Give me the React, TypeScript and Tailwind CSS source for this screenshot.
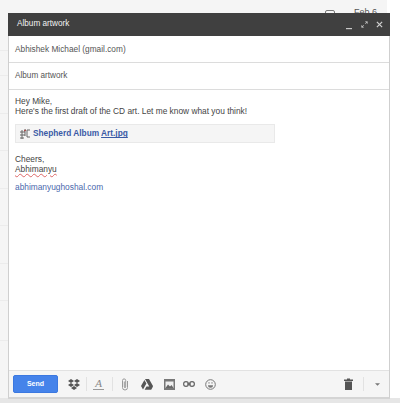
import React from 'react'

function Divider() {
  return <div className="w-px h-[14px] bg-[#e2e2e2]" />
}

export default function App() {
  return (
    <div className="relative w-[400px] h-[403px] overflow-hidden bg-[#f5f5f5] font-['Liberation_Sans',Arial,sans-serif] text-[#444]">
      {/* page behind the compose window */}
      <div className="absolute top-0 right-0 w-[13px] h-full bg-white" />
      <div className="absolute bottom-0 left-0 w-full h-[5px] bg-[#e6e6e6]" />
      <span className="absolute left-[354px] top-[7px] text-[9px] leading-[10px] text-[#555]">Feb 6</span>
      <div className="absolute left-[325px] top-[10px] w-[10px] h-[6px] rounded-[2px] border border-[#777]" />
      {[50, 75, 113, 150, 188, 225, 263, 300, 340].map((y) => (
        <div key={y} className="absolute left-0 w-[8px] h-px bg-[#ececec]" style={{ top: y }} />
      ))}

      <div className="relative ml-[8px] mt-[13px] w-[382px] h-[386px] flex flex-col bg-white border-x border-[#cfcfcf] border-b-2 border-b-[#d4d4d4]">
        <div className="h-[23px] -mx-px shrink-0 bg-[#404040] flex items-center pl-[9px] pr-[7px]">
          <span className="text-[8.2px] text-[#f2f2f2]">Album artwork</span>
          <div className="ml-auto flex items-center gap-[8px]">
            <svg width="6" height="8" viewBox="0 0 6 8" className="mt-[2px] mr-[1px]">
              <rect x="0" y="6" width="6" height="1.2" fill="#c8c8c8" />
            </svg>
            <svg width="7" height="7" viewBox="0 0 9 9" fill="none" stroke="#c8c8c8" strokeWidth="1.1">
              <path d="M1 8 L3.5 5.5 M5.5 3.5 L8 1 M5.5 1 H8 V3.5 M1 5.5 V8 H3.5" />
            </svg>
            <svg width="7" height="7" viewBox="0 0 8 8" fill="none" stroke="#d0d0d0" strokeWidth="1.4">
              <path d="M1 1 L7 7 M7 1 L1 7" />
            </svg>
          </div>
        </div>

        <div className="h-[27px] shrink-0 flex items-center pl-[6px] border-b border-[#dcdcdc] text-[8.3px] text-[#555]">
          Abhishek Michael (gmail.com)
        </div>
        <div className="h-[27px] shrink-0 flex items-center pl-[6px] border-b border-[#dcdcdc] text-[8.2px] text-[#555]">
          Album artwork
        </div>

        <div className="flex-1 pl-[6px] pt-[6px] text-[8.35px] text-[#444]">
          <div className="leading-[10px]">Hey Mike,</div>
          <div className="leading-[10px]">Here's the first draft of the CD art. Let me know what you think!</div>

          <div className="mt-[8px] w-[260px] h-[19px] flex items-center pl-[3px] gap-[2px] bg-[#f5f5f5] border border-[#e9e9e9]">
            <svg width="12" height="12" viewBox="0 0 12 12" fill="none" stroke="#666" strokeWidth="1">
              <path d="M1 4 H6 M1 7 H6 M1 10 H5 M3 2 V11 M6 1 V8 M8 2 H11 M8 2 V9 H11" />
              <path d="M5 3 L7 2" stroke="#a33" />
            </svg>
            <span className="text-[8.3px] font-bold leading-none text-[#3a5aa5]">
              Shepherd Album <span className="underline">Art.jpg</span>
            </span>
          </div>

          <div className="mt-[11px] leading-[10px]">Cheers,</div>
          <div className="leading-[10px] underline decoration-wavy decoration-[#d66] decoration-[1px]">Abhimanyu</div>
          <div className="mt-[8px] text-[#4a69ad] leading-[10px]">abhimanyughoshal.com</div>
        </div>

        <div className="h-[27px] shrink-0 flex items-center bg-[#f5f5f5] border-t border-[#e2e2e2] pl-[4px] pr-[9px]">
          <button className="w-[45px] h-[18px] rounded-[2px] bg-[#4583ea] border border-[#3b78e0] text-white text-[7px] font-bold flex items-center justify-center">
            Send
          </button>
          {/* dropbox */}
          <svg width="12" height="11" viewBox="0 0 12 11" fill="#555" className="ml-[10px]">
            <path d="M3 0 L6 2 L3 4 L0 2 Z M9 0 L12 2 L9 4 L6 2 Z M3 4 L6 6 L3 8 L0 6 Z M9 4 L12 6 L9 8 L6 6 Z M3 9 L6 7 L9 9 L6 11 Z" />
          </svg>
          <div className="ml-[6px]"><Divider /></div>
          <span className="ml-[6px] w-[11px] text-center text-[11px] leading-[11px] italic font-['Liberation_Serif',serif] text-[#888] border-b border-[#999]">A</span>
          <div className="ml-[8px]"><Divider /></div>
          {/* attach */}
          <svg width="8" height="13" viewBox="0 0 8 13" fill="none" stroke="#999" strokeWidth="1" className="ml-[8px]">
            <path d="M6.5 3 V9.5 A2.5 2.5 0 0 1 1.5 9.5 V2.5 A1.6 1.6 0 0 1 4.7 2.5 V9 A.7 .7 0 0 1 3.3 9 V3.5" />
          </svg>
          {/* drive */}
          <svg width="12" height="11" viewBox="0 0 12 11" fill="#555" className="ml-[12px]">
            <path d="M4 0 H8 L12 7 L10 10.5 Z M3.4 1 L5.4 4.6 L2 10.5 L0 7 Z M5.5 7.5 H12 L10.2 10.8 H3.6 Z" />
          </svg>
          {/* photo */}
          <svg width="11" height="11" viewBox="0 0 11 11" className="ml-[11px]">
            <rect width="11" height="11" fill="#777" />
            <rect x="1.5" y="2.5" width="8" height="6.5" fill="#eee" />
            <path d="M1.5 9 L4 5.5 L6 7.5 L7.5 6 L9.5 9 Z" fill="#666" />
          </svg>
          {/* link */}
          <svg width="12" height="6" viewBox="0 0 12 6" fill="none" stroke="#666" strokeWidth="1.2" className="ml-[8px]">
            <rect x=".6" y=".6" width="4.8" height="4.8" rx="2.4" />
            <rect x="6.6" y=".6" width="4.8" height="4.8" rx="2.4" />
            <path d="M4 3 H8" />
          </svg>
          {/* emoji */}
          <svg width="11" height="11" viewBox="0 0 11 11" fill="none" stroke="#777" strokeWidth="1" className="ml-[10px]">
            <circle cx="5.5" cy="5.5" r="4.8" />
            <path d="M3 6.2 H8 A2.5 2.5 0 0 1 3 6.2 Z" fill="#777" stroke="none" />
            <path d="M4 3.2 V4.6 M7 3.2 V4.6" />
          </svg>

          <div className="ml-auto flex items-center">
            <svg width="9" height="12" viewBox="0 0 9 12" fill="#555">
              <path d="M0 1.5 H3 V.5 H6 V1.5 H9 V3 H0 Z M1 3.5 H8 V12 H1 Z" />
            </svg>
            <div className="ml-[10px]"><Divider /></div>
            <svg width="5" height="3" viewBox="0 0 6 3" fill="#777" className="ml-[11px]">
              <path d="M0 0 H6 L3 3 Z" />
            </svg>
          </div>
        </div>
      </div>
    </div>
  )
}
